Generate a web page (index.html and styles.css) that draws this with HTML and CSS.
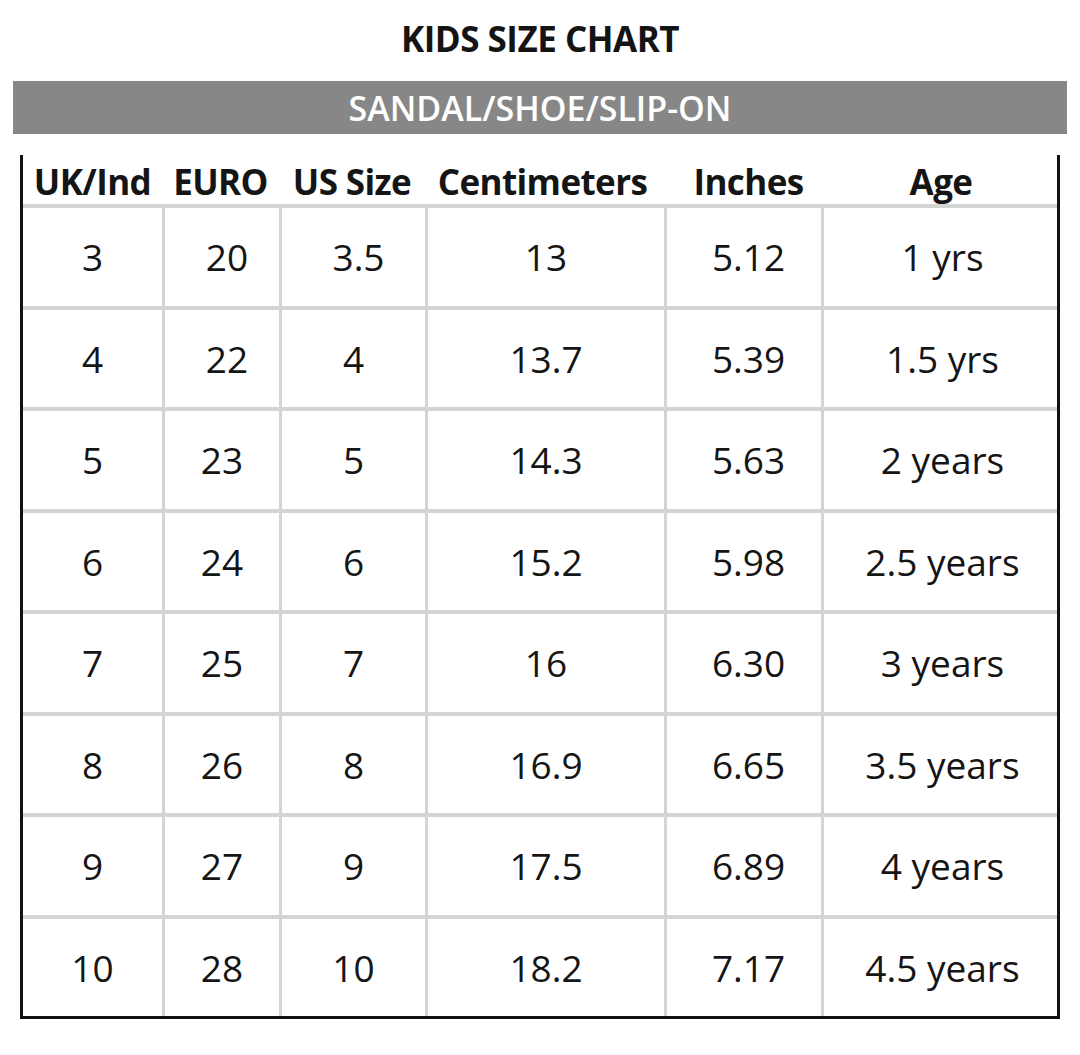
FILE: index.html
```html
<!DOCTYPE html>
<html lang="en">
<head>
<meta charset="utf-8">
<title>Kids Size Chart</title>
<link rel="stylesheet" href="styles.css">
</head>
<body>
<div class="page">
  <h1 class="title">KIDS SIZE CHART</h1>
  <div class="banner">SANDAL/SHOE/SLIP-ON</div>
  <div class="chart">
    <div class="row head">
      <div class="cell">UK/Ind</div>
      <div class="cell">EURO</div>
      <div class="cell">US Size</div>
      <div class="cell">Centimeters</div>
      <div class="cell">Inches</div>
      <div class="cell">Age</div>
    </div>
    <div class="row">
      <div class="cell">3</div><div class="cell shift">20</div><div class="cell shift">3.5</div><div class="cell">13</div><div class="cell">5.12</div><div class="cell">1 yrs</div>
    </div>
    <div class="row">
      <div class="cell">4</div><div class="cell shift">22</div><div class="cell">4</div><div class="cell">13.7</div><div class="cell">5.39</div><div class="cell">1.5 yrs</div>
    </div>
    <div class="row">
      <div class="cell">5</div><div class="cell">23</div><div class="cell">5</div><div class="cell">14.3</div><div class="cell">5.63</div><div class="cell">2 years</div>
    </div>
    <div class="row">
      <div class="cell">6</div><div class="cell">24</div><div class="cell">6</div><div class="cell">15.2</div><div class="cell">5.98</div><div class="cell">2.5 years</div>
    </div>
    <div class="row">
      <div class="cell">7</div><div class="cell">25</div><div class="cell">7</div><div class="cell">16</div><div class="cell">6.30</div><div class="cell">3 years</div>
    </div>
    <div class="row">
      <div class="cell">8</div><div class="cell">26</div><div class="cell">8</div><div class="cell">16.9</div><div class="cell">6.65</div><div class="cell">3.5 years</div>
    </div>
    <div class="row">
      <div class="cell">9</div><div class="cell">27</div><div class="cell">9</div><div class="cell">17.5</div><div class="cell">6.89</div><div class="cell">4 years</div>
    </div>
    <div class="row">
      <div class="cell">10</div><div class="cell">28</div><div class="cell">10</div><div class="cell">18.2</div><div class="cell">7.17</div><div class="cell">4.5 years</div>
    </div>
  </div>
</div>
</body>
</html>
```

FILE: styles.css
```css
html, body {
  margin: 0;
  padding: 0;
  background: #ffffff;
}

body {
  font-family: "Open Sans", "Liberation Sans", sans-serif;
  color: #151515;
}

.page {
  width: 1080px;
  padding-top: 21px;
}

.title {
  margin: 0;
  font-size: 35px;
  font-weight: 700;
  line-height: 36px;
  height: 36px;
  text-align: center;
  letter-spacing: -0.5px;
  color: #141414;
}

.banner {
  margin: 24px 13px 0 13px;
  height: 53px;
  box-sizing: border-box;
  padding-top: 2px;
  background: #878787;
  color: #ffffff;
  font-size: 34px;
  font-weight: 600;
  letter-spacing: 0;
  line-height: 51px;
  text-align: center;
}

.chart {
  margin: 21px 20px 0 20px;
  width: 1034px;
  border-left: 3px solid #111111;
  border-right: 3px solid #111111;
  border-bottom: 3px solid #111111;
}

.row {
  display: grid;
  grid-template-columns: 139px 117px 146px 239px 157px 236px;
  height: 101.5px;
  box-sizing: border-box;
  border-top: 4px solid #d4d4d4;
}

.cell {
  display: flex;
  align-items: center;
  justify-content: center;
  font-size: 37px;
  font-weight: 400;
  white-space: nowrap;
  border-left: 3px solid #d4d4d4;
}

.row .cell:first-child {
  border-left: none;
}

.row .cell:nth-child(5) {
  padding-left: 9px;
}

.row .cell:nth-child(6) {
  padding-left: 4px;
}

.row .shift {
  padding-left: 10px;
}

.row.head {
  height: 49px;
  border-top: none;
}

.row.head .cell {
  border-left: none;
  align-items: flex-start;
  padding-top: 5px;
  line-height: 44px;
  font-size: 35px;
  font-weight: 700;
  letter-spacing: -0.6px;
}

.row.head .cell:nth-child(4) {
  padding-right: 4px;
}

.row.head .cell:nth-child(5) {
  padding-left: 12px;
}
```
